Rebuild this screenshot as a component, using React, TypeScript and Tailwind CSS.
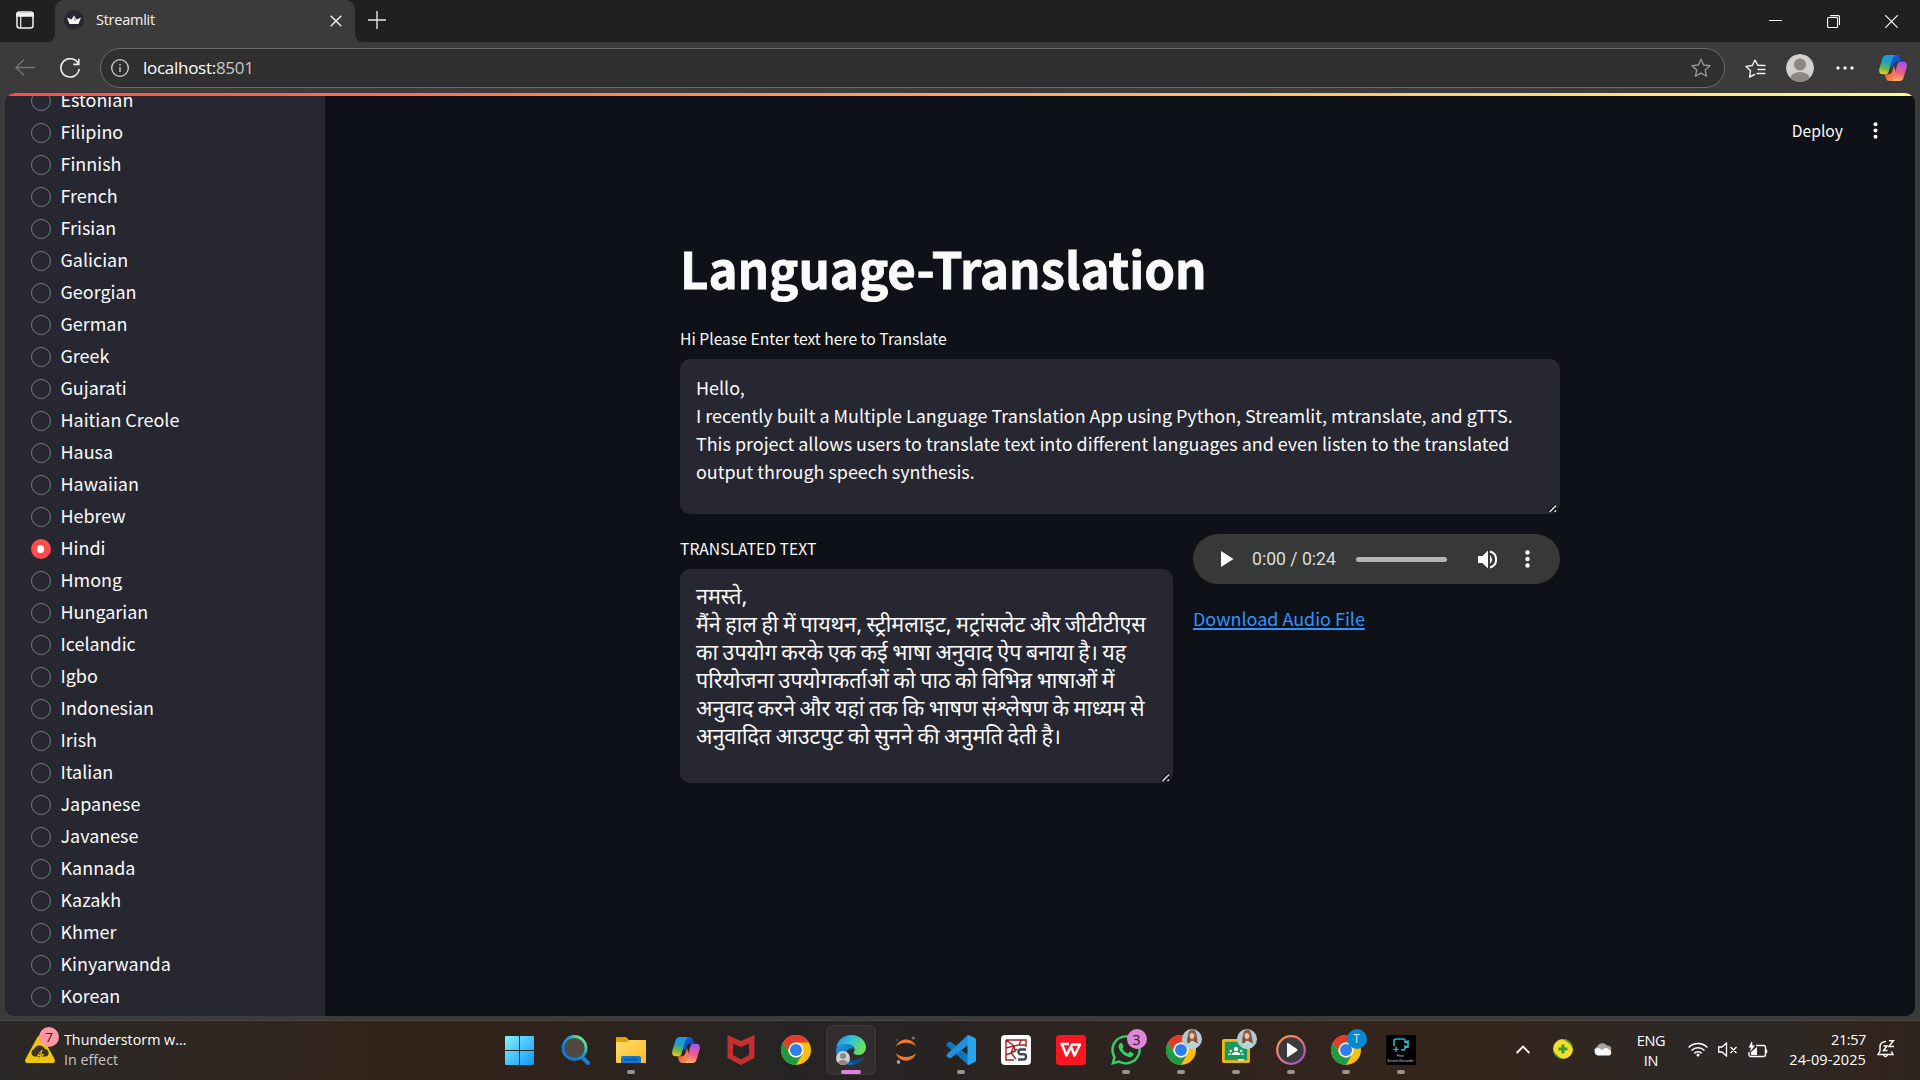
import React from "react";
import { FaWhatsapp } from "react-icons/fa";

const languages = [
  "Estonian", "Filipino", "Finnish", "French", "Frisian", "Galician", "Georgian", "German", "Greek", "Gujarati",
  "Haitian Creole", "Hausa", "Hawaiian", "Hebrew", "Hindi", "Hmong", "Hungarian", "Icelandic", "Igbo", "Indonesian",
  "Irish", "Italian", "Japanese", "Javanese", "Kannada", "Kazakh", "Khmer", "Kinyarwanda", "Korean",
];

const english = [
  "Hello,",
  "I recently built a Multiple Language Translation App using Python, Streamlit, mtranslate, and gTTS.",
  "This project allows users to translate text into different languages and even listen to the translated",
  "output through speech synthesis.",
];

const hindi = [
  "नमस्ते,",
  "मैंने हाल ही में पायथन, स्ट्रीमलाइट, मट्रांसलेट और जीटीटीएस",
  "का उपयोग करके एक कई भाषा अनुवाद ऐप बनाया है। यह",
  "परियोजना उपयोगकर्ताओं को पाठ को विभिन्न भाषाओं में",
  "अनुवाद करने और यहां तक कि भाषण संश्लेषण के माध्यम से",
  "अनुवादित आउटपुट को सुनने की अनुमति देती है।",
];

function Copilot({ id }: { id: string }) {
  const ribbon = "M8 0H17.5C15.2 0 14 1.6 13.4 3.6L9.6 16.8C9 18.6 8 19.2 6.5 19.2H3.6C.6 19.2-.4 16.6.4 13.6L3.4 3.6C4.2 1 5.6 0 8 0Z";
  const fold = "M11.5 9.5 13.4 3.2C14 1.2 15.2 0 17.5 0 19.8 0 20.6 1.2 21.2 3L22.2 6.8H18.4C16.2 6.8 15.2 8 14.6 10L13 15Z";
  return (
    <svg width="28" height="26" viewBox="0 0 28 26" className="shrink-0">
      <defs>
        <linearGradient id={id + "a"} x1="0.5" y1="0" x2="0.3" y2="1">
          <stop offset="0" stopColor="#159be8" /><stop offset=".35" stopColor="#1f9dc4" />
          <stop offset=".7" stopColor="#65b84b" /><stop offset="1" stopColor="#f5ca16" />
        </linearGradient>
        <linearGradient id={id + "b"} x1="0.6" y1="0" x2="0.4" y2="1">
          <stop offset="0" stopColor="#ffb35c" /><stop offset=".45" stopColor="#f25c85" /><stop offset="1" stopColor="#a155f0" />
        </linearGradient>
        <linearGradient id={id + "c"} x1="0" y1="0" x2="1" y2="1">
          <stop offset="0" stopColor="#1769e0" /><stop offset="1" stopColor="#0b39a8" />
        </linearGradient>
        <linearGradient id={id + "d"} x1="0" y1="0" x2="1" y2="1">
          <stop offset="0" stopColor="#ff9a56" /><stop offset="1" stopColor="#e8443c" />
        </linearGradient>
      </defs>
      <path d={fold} fill={`url(#${id}c)`} />
      <path d={fold} fill={`url(#${id}d)`} transform="rotate(180 14 13)" />
      <path d={ribbon} fill={`url(#${id}a)`} />
      <path d={ribbon} fill={`url(#${id}b)`} transform="rotate(180 14 13)" />
    </svg>
  );
}

function Chrome() {
  return (
    <svg width="30" height="30" viewBox="0 0 30 30">
      <circle cx="15" cy="15" r="15" fill="#fdbd12" />
      <path d="M15 7.5H28A15 15 0 0 0 2 7.5L8.5 18.75A7.5 7.5 0 0 1 15 7.5Z" fill="#e33b2e" />
      <path d="M8.5 18.75 2 7.5A15 15 0 0 0 15 30L21.5 18.75A7.5 7.5 0 0 1 8.5 18.75Z" fill="#219a45" />
      <circle cx="15" cy="15" r="7.5" fill="#fff" />
      <circle cx="15" cy="15" r="6" fill="#2f7de9" />
    </svg>
  );
}

function Portrait() {
  return (
    <svg width="20" height="20" viewBox="0 0 20 20" className="absolute -top-1.5 -right-1.5 rounded-full">
      <rect width="20" height="20" fill="#b4cbd6" />
      <path d="M5 14C5.500 6 6 .5 10.500 .5S14.500 7 16 14Z" fill="#8c5f45" />
      <path d="M4 20C5 14 8 12 10.500 12s5 2 6 8Z" fill="#b5d6da" />
      <ellipse cx="10" cy="6.5" rx="2.400" ry="3.400" fill="#e9c2ab" />
      <path d="M7 6Q9.500 2 12.600 6L12 3 10 1.500 8 3Z" fill="#8c5f45" />
      <path d="M7 8v6M13 8v5" stroke="#7a4d35" strokeWidth="1.5" />
    </svg>
  );
}

function Windows() {
  return (
    <svg width="29" height="29" viewBox="0 0 29 29" className="mr-0.5">
      <defs>
        <linearGradient id="win" x1="0" y1="0" x2="1" y2="1">
          <stop offset="0" stopColor="#83effd" /><stop offset="1" stopColor="#0e98fb" />
        </linearGradient>
      </defs>
      <path d="M0 1Q0 0 1 0H14V14H0ZM15 0H28Q29 0 29 1V14H15ZM0 15H14V29H1Q0 29 0 28ZM15 15H29V28Q29 29 28 29H15Z" fill="url(#win)" />
    </svg>
  );
}

function SearchIcon() {
  return (
    <svg width="30" height="30" viewBox="0 0 30 30">
      <defs>
        <linearGradient id="srch" x1="0" y1="1" x2="1" y2="0">
          <stop offset=".3" stopColor="#0f7ad8" /><stop offset=".6" stopColor="#19a0cc" /><stop offset=".85" stopColor="#63e08c" />
        </linearGradient>
      </defs>
      <path d="m20.5 21.5 6.5 6.5" stroke="#1280dc" strokeWidth="4" strokeLinecap="round" />
      <circle cx="13.5" cy="13" r="11.5" fill="#514841" stroke="url(#srch)" strokeWidth="2.8" />
    </svg>
  );
}

function Explorer() {
  return (
    <svg width="30" height="28" viewBox="0 0 30 28">
      <defs>
        <linearGradient id="fold" x1="0" y1="0" x2="1" y2="1">
          <stop offset="0" stopColor="#ffdb6b" /><stop offset="1" stopColor="#fcbd22" />
        </linearGradient>
      </defs>
      <path d="M0 2Q0 1 1 1H10L13 4H28Q30 4 30 6V10H0Z" fill="#e2a10b" />
      <path d="M0 6H10Q12 6 13 4H29Q30 4 30 5V26Q30 27 29 27H1Q0 27 0 26Z" fill="url(#fold)" />
      <path d="M5 27V22Q5 20 7 20H23Q25 20 25 22V27Z" fill="#1477cc" />
      <path d="M9 23.5H21" stroke="#0b4b91" strokeWidth="1.4" strokeLinecap="round" />
    </svg>
  );
}

function McAfee() {
  return (
    <svg width="28" height="30" viewBox="0 0 28 30">
      <path d="M.5 0 14 6 27.5 0V23L14 30 .5 23ZM6 8.5V20L14 24.2 22 20V8.5L14 12.3Z" fill="#c22f2e" fillRule="evenodd" />
    </svg>
  );
}

function Edge() {
  return (
    <svg width="30" height="30" viewBox="0 0 30 30">
      <defs>
        <linearGradient id="eg1" x1="0" y1="0" x2="1" y2=".4">
          <stop offset="0" stopColor="#1b8fdc" /><stop offset=".5" stopColor="#2fc0dc" /><stop offset="1" stopColor="#6be05a" />
        </linearGradient>
        <linearGradient id="eg2" x1="0" y1="0" x2="1" y2="1">
          <stop offset="0" stopColor="#1c9ae0" /><stop offset="1" stopColor="#0d55a8" />
        </linearGradient>
      </defs>
      <path d="M.3 13C1.5 5 7.5 0 15 0 24 0 30 6 30 12.5 30 17 26.5 20 22.5 20 19.5 20 17.5 19 17.5 17.8 17.5 17 18.6 16.3 18.6 14.5 18.6 11.5 15 9.3 10.5 9.3 6 9.3 2 11 .3 13Z" fill="url(#eg1)" />
      <path d="M0 15C.5 11 5 9 9.5 9 14.5 9 18 11.5 18.6 14.5 17 12.5 10.5 13.5 10.5 18.5 10.5 24.5 16.5 28 22 27.5 19 29.5 17 30 15 30 6.5 30 0 23.5 0 15Z" fill="url(#eg2)" />
      <path d="M10.5 18.5C10.5 25 18 27 27.5 22.5 28.5 22 28.3 23 27.8 23.8 26.5 25.8 24.5 27.5 22 28.3 16 29.5 9.5 25.5 10.5 18.5Z" fill="#104a8c" />
    </svg>
  );
}

function Jupyter() {
  return (
    <svg width="30" height="30" viewBox="0 0 30 30">
      <path d="M5 11.5C8 2 22 2 25 11.5 19 6.5 11 6.5 5 11.5ZM5 18.5C8 28 22 28 25 18.5 19 23 11 23 5 18.5Z" fill="#f3772a" />
      <circle cx="22.3" cy="3" r="1.6" fill="#767677" />
      <circle cx="6" cy="5" r="1" fill="#666" />
      <circle cx="7.5" cy="27" r="1.9" fill="#9e9e9e" />
    </svg>
  );
}

function VsCode() {
  return (
    <svg width="30" height="30" viewBox="0 0 30 30">
      <path d="M22 30V20L5 7 3 6.8.5 9 1 11Z" fill="#0d76bd" />
      <path d="M22 0V10L5 23 3 23.2.5 21 1 19Z" fill="#2190d8" />
      <path d="M21.5.2 22.5 0 29 3Q30 3.6 30 4.6V25.4Q30 26.4 29 27L22.5 30 21.5 29.5Z" fill="#2aa3f0" />
    </svg>
  );
}

function Spyder() {
  return (
    <svg width="30" height="30" viewBox="0 0 30 30">
      <rect width="30" height="30" rx="4" fill="#fafafa" />
      <path d="M5 5H25V12M5 5V25H13M5 5 13 11 5 13M20 5 18 10 13 11 10 18 5 20M25 10 18 10M13 11 14 16 10 18M14 16 16 14M10 18 15 24" stroke="#9c2427" strokeWidth="1.4" fill="none" />
      <path d="M25 14.5H19.5Q17.5 14.5 17.5 16.8T19.5 19.3H23Q25 19.3 25 21.8T23 24.5H17" stroke="#41464a" strokeWidth="2.4" fill="none" />
    </svg>
  );
}

function Wps() {
  return (
    <svg width="30" height="30" viewBox="0 0 30 30">
      <rect width="30" height="30" rx="3.5" fill="#fb1521" />
      <path d="M4.5 9H13M6 9.5 10.5 20.5 15 11.5 18.5 20.5 24 9.5H16L14.5 12.5" stroke="#fff" strokeWidth="2.5" strokeLinejoin="round" fill="none" />
    </svg>
  );
}

function Classroom() {
  return (
    <svg width="28" height="24" viewBox="0 0 28 24" className="mt-px">
      <rect width="28" height="24" rx="2" fill="#f5b313" />
      <rect x="2.8" y="2.8" width="22.4" height="18.4" fill="#189a5b" />
      <g fill="#fff">
        <circle cx="14" cy="10" r="2.2" /><path d="M9.5 16Q10 13 14 13T18.5 16Z" />
        <circle cx="8.7" cy="12" r="1.2" /><circle cx="19.3" cy="12" r="1.2" />
        <path d="M6 16Q6 14.3 9 14.3L8.5 16ZM22 16Q22 14.3 19 14.3L19.5 16ZM16 20H22V21.5H16Z" />
      </g>
    </svg>
  );
}

function MediaPlayer() {
  return (
    <svg width="30" height="30" viewBox="0 0 30 30">
      <defs>
        <linearGradient id="mp" x1="0" y1="0" x2="1" y2="1">
          <stop offset="0" stopColor="#ff9a3d" /><stop offset=".5" stopColor="#e8748a" /><stop offset="1" stopColor="#8b4fe0" />
        </linearGradient>
      </defs>
      <circle cx="15" cy="15" r="13.8" fill="#3a3a3c" stroke="url(#mp)" strokeWidth="2.2" />
      <path d="M11 8.5Q11 7.5 12 8L21 14Q22 15 21 16L12 22Q11 22.5 11 21.5Z" fill="#f6f6f6" />
    </svg>
  );
}

function Recorder() {
  return (
    <div className="flex h-[30px] w-[30px] flex-col items-center bg-black pt-[3px]">
      <svg width="18" height="15" viewBox="0 0 18 15" fill="none" stroke="#35b3d3" strokeWidth="1.6">
        <path d="M2 8V3Q2 1 4 1H12Q13 1 13 3V4L16 3V9L13 8V10Q13 12 11 12H9" />
        <path d="M4 8.5V14M1.3 11.3H6.7" strokeWidth="1.3" />
      </svg>
      <div className="mt-px text-center font-['Liberation_Sans'] text-[3.5px] leading-[4.5px] text-gray-300">
        <div>Free</div>
        <div className="whitespace-nowrap">Screen Recorder</div>
      </div>
    </div>
  );
}

function Cell({ children, run, active }: { children: React.ReactNode; run?: boolean; active?: boolean }) {
  return (
    <div className="flex w-[55px] justify-center">
      <div className={active
        ? "relative mt-1 flex h-[50px] w-[50px] items-center justify-center rounded-md border border-[#3f3a39] bg-[#322e2e]"
        : "relative mt-1 flex h-[50px] w-[50px] items-center justify-center"}>
        <div className="relative flex items-center justify-center">{children}</div>
        {run && <div className="absolute bottom-px h-1 w-2 rounded-full bg-[#989492]" />}
        {active && <div className="absolute bottom-0 h-1 w-5 rounded-full bg-[#e181d9]" />}
      </div>
    </div>
  );
}

function Grip() {
  return (
    <svg width="10" height="10" viewBox="0 0 10 10" className="absolute right-[2px] bottom-[1px]">
      <path d="M.5 8.5 8 1M4.5 9.5 9 5" stroke="#08090c" strokeWidth="1.6" />
      <path d="M1.5 9 8 2.5M6.500 9 8 7.500" stroke="#dcdcdc" strokeWidth="1.5" />
    </svg>
  );
}

function TitleBar() {
  return (
    <div className="flex h-[42px] bg-[#3b3b3b]">
      <div className="flex w-[55px] rounded-br-lg bg-[#202020] pt-[11px] pl-4">
        <svg width="18" height="18" viewBox="0 0 18 18" fill="none" stroke="#f2f2f2" strokeWidth="1.5">
          <rect x="1" y="1" width="16" height="16" rx="2.5" />
          <path d="M1 2.5H17V5H1Z" fill="#f2f2f2" /><path d="M4.7 5V17" strokeWidth="1.2" />
        </svg>
      </div>
      <div className="bg-[#202020]">
        <div className="flex h-[42px] w-[300px] rounded-t-[9px] bg-[#3b3b3b] pt-2.5 pl-[9px]">
          <svg width="20" height="20" viewBox="0 0 20 20">
            <circle cx="10" cy="10" r="10" fill="#262730" />
            <path d="M3 7.5 7.5 9.5 10 5.5 12.5 9.5 17 7.5 14.5 14H5.5Z" fill="#f4f4f4" />
            <path d="M10 5.5 12.5 9.5 10 12Z" fill="#bdbdc0" />
          </svg>
          <span className="ml-3 w-[230px] font-['Open_Sans',sans-serif] text-[14.5px] leading-5 tracking-[-0.25px] text-[#f3f3f3]">Streamlit</span>
          <svg width="12" height="12" viewBox="0 0 12 12" className="mt-[5px] ml-[4px]" stroke="#e8e8e8" strokeWidth="1.5"><path d="M.7.7 11.3 11.3M11.3.7.7 11.3" /></svg>
        </div>
      </div>
      <div className="flex flex-1 rounded-bl-lg bg-[#202020]">
        <svg width="18" height="18" viewBox="0 0 18 18" className="mt-[11px] ml-[13px]" stroke="#e8e8e8" strokeWidth="1.4"><path d="M9 0V18M0 9H18" /></svg>
        <div className="ml-auto flex pt-[15px] pr-[22px]">
          <svg width="13" height="13" viewBox="0 0 13 13" className="mr-[45px]"><path d="M0 5.5H13" stroke="#fff" /></svg>
          <svg width="13" height="13" viewBox="0 0 13 13" className="mr-[45px]" fill="none" stroke="#fff" strokeWidth="1.1">
            <rect x=".6" y="2.5" width="10" height="10" rx="1" /><path d="M3 .6H11Q12.5.6 12.5 2V10" />
          </svg>
          <svg width="13" height="13" viewBox="0 0 13 13" stroke="#fff" strokeWidth="1.2"><path d="M.3.3 12.7 12.7M12.7.3.3 12.7" /></svg>
        </div>
      </div>
    </div>
  );
}

const star = "M10 1.2 12.6 7 19 7.7 14.2 12 15.6 18.3 10 15.1 4.4 18.3 5.8 12 1 7.7 7.4 7Z";

function Toolbar() {
  return (
    <div className="flex h-[51px] items-start bg-[#3b3b3b]">
      <svg width="21" height="18" viewBox="0 0 21 18" className="mt-[17px] ml-[15px]" fill="none" stroke="#757575" strokeWidth="1.4"><path d="M20 8.5H1M9 .5 1 8.5 9 16.5" /></svg>
      <svg width="21" height="21" viewBox="0 0 21 21" className="mt-4 ml-6" fill="none" stroke="#f0f0f0" strokeWidth="1.6">
        <path d="M18.5 6.1A9.2 9.2 0 1 0 19.2 11M18.8.8V6.4H13.2" />
      </svg>
      <div className="mt-1.5 ml-[19px] flex h-10 w-[1625px] items-center rounded-full border border-[#6b6b6b] bg-[#303030] pr-[13px] pl-[10px]">
        <svg width="18" height="18" viewBox="0 0 18 18" fill="none" stroke="#d6d6d6" strokeWidth="1.3">
          <circle cx="9" cy="9" r="8.3" /><path d="M9 8V13" /><path d="M9 5V6.5" />
        </svg>
        <span className="ml-[14px] pb-px font-['Open_Sans',sans-serif] text-[17px] tracking-[-0.28px] text-white">
          localhost:<span className="text-[#c9c9c9]">8501</span>
        </span>
        <svg width="20" height="20" viewBox="0 0 20 20" className="ml-auto" fill="none" stroke="#9a9a9a" strokeWidth="1.3" strokeLinejoin="round"><path d={star} /></svg>
      </div>
      <svg width="21" height="20" viewBox="0 0 21 20" className="mt-[17px] ml-5" fill="none" stroke="#f0f0f0" strokeWidth="1.4" strokeLinejoin="round" strokeLinecap="round">
        <path d="M17 6.6 12.8 6.2 10 1 7.3 6.5 1 7.4 5.5 11.8 4.5 18 9.5 15.5M15 6.500H20M13 10.500H20M12 14.500H20" />
      </svg>
      <svg width="28" height="28" viewBox="0 0 28 28" className="mt-3 ml-5 rounded-full">
        <circle cx="14" cy="14" r="14" fill="#d3d0cd" />
        <circle cx="14" cy="10.5" r="6" fill="#8b8785" /><ellipse cx="14" cy="25" rx="10" ry="7" fill="#8b8785" />
      </svg>
      <svg width="18" height="4" viewBox="0 0 18 4" className="mt-6 ml-[22px]" fill="#f0f0f0"><circle cx="2" cy="2" r="1.7" /><circle cx="9" cy="2" r="1.7" /><circle cx="16" cy="2" r="1.7" /></svg>
      <div className="mt-[13px] ml-[25px]"><Copilot id="top" /></div>
    </div>
  );
}

function Sidebar() {
  return (
    <div className="w-80 shrink-0 overflow-hidden bg-[#262730] pl-[26px]">
      <div className="-mt-[11px]">
        {languages.map((name) => (
          <div key={name} className="flex h-8 items-center">
            {name === "Hindi"
              ? <div className="flex h-5 w-5 items-center justify-center rounded-full bg-[#ff4b4b]"><div className="mr-px h-[7.5px] w-[7.5px] rounded-full bg-white" /></div>
              : <div className="h-5 w-5 rounded-full border border-[#797a82] bg-[#272833]" />}
            <span className="-mt-[5px] ml-[9.5px] text-[17.94px] leading-7 whitespace-nowrap">{name}</span>
          </div>
        ))}
      </div>
    </div>
  );
}

function Player() {
  return (
    <div className="flex h-[50px] w-[367px] items-center rounded-full bg-[#373938]">
      <svg width="13" height="16" viewBox="0 0 13 16" className="ml-7" fill="#fff"><path d="M0 0 12.5 8 0 16Z" /></svg>
      <span className="ml-[18px] w-[86px] font-['Roboto',sans-serif] text-[17.6px] whitespace-nowrap text-[#dcdcdc]">0:00 / 0:24</span>
      <div className="ml-[18px] h-[5px] w-[91px] rounded-full bg-[#b5b5b5]" />
      <svg width="20" height="19" viewBox="0 0 20 19" className="ml-[31px]" fill="#fff">
        <path d="M0 6H4.5L10 .5V18.5L4.5 13H0Z" /><path d="M12 5Q16 9.5 12 14Z" />
        <path d="M12 1.5A8.3 8.3 0 0 1 12 17.5" fill="none" stroke="#fff" strokeWidth="2" />
      </svg>
      <svg width="5" height="18" viewBox="0 0 5 18" className="ml-[27px]" fill="#fff"><circle cx="2.5" cy="2.5" r="2.2" /><circle cx="2.5" cy="9" r="2.2" /><circle cx="2.5" cy="15.5" r="2.2" /></svg>
    </div>
  );
}

function Main() {
  return (
    <div className="flex flex-1 flex-col bg-[#0e1117]">
      <div className="flex h-[75px] items-center justify-end pr-[37px] pb-[7px]">
        <span className="mt-[2px] mr-[30px] text-[15.7px] leading-6">Deploy</span>
        <svg width="5" height="17" viewBox="0 0 5 17" fill="#fff"><circle cx="2.5" cy="2.3" r="2" /><circle cx="2.5" cy="8.5" r="2" /><circle cx="2.5" cy="14.7" r="2" /></svg>
      </div>
      <div className="ml-[355px] w-[880px] pt-[64px]">
        <h1 className="h-[66px] text-[49.3px] leading-[66px] font-bold tracking-[-0.05px] whitespace-nowrap [-webkit-text-stroke:0.8px_#fafafa]">Language-Translation</h1>
        <div className="mt-6 h-7 text-[15.7px] leading-7 whitespace-nowrap">Hi Please Enter text here to Translate</div>
        <div className="relative mt-1.5 h-[155px] rounded-[10px] bg-[#262730] px-4 pt-3.5">
          {english.map((l) => <div key={l} className="h-7 text-[17.93px] leading-7 whitespace-nowrap">{l}</div>)}
          <Grip />
        </div>
        <div className="mt-5 flex gap-5">
          <div className="w-[493px]">
            <div className="h-[35px] text-[15.7px] leading-[30px] whitespace-nowrap">TRANSLATED TEXT</div>
            <div className="relative h-[214px] rounded-[10px] bg-[#262730] px-4 pt-[16px]">
              {hindi.map((l) => <div key={l} className="h-7 font-['Noto_Sans_Devanagari','Noto_Sans',sans-serif] text-[21.5px] leading-7 [word-spacing:-1.05px] whitespace-nowrap">{l}</div>)}
              <Grip />
            </div>
          </div>
          <div>
            <Player />
            <div className="mt-[19px] text-[17.94px] leading-[30px] text-[#2f93ff] underline decoration-2 underline-offset-[2px]">Download Audio File</div>
          </div>
        </div>
      </div>
    </div>
  );
}

function Taskbar() {
  return (
    <div className="flex h-[60px] border-t border-[#4b4844] bg-[linear-gradient(90deg,#2a2826_0%,#2d2723_8%,#33241a_20%,#30231b_27%,#262423_41%,#272322_48%,#2c2320_56%,#34251c_72%,#34251c_78%,#2d2825_86%,#2c2825_93%,#32241c_98%,#2d2522_100%)] font-['Open_Sans',sans-serif]">
      <div className="flex w-[493px] pt-[7px] pl-[25px]">
        <div className="relative h-9 w-[34px]">
          <svg width="30" height="28" viewBox="0 0 30 28" className="mt-[7px]">
            <path d="M12.5 2Q15 -1.5 17.5 2L29.5 24Q31 28 27 28H3Q-1 28 .5 24Z" fill="#f2c40f" />
            <path d="M9 21.5A4 4 0 0 1 9 14 6 6 0 0 1 20 14 4 4 0 0 1 21.5 21.5Z" fill="#3b3522" />
            <path d="M17 15 12.5 20.5H16L13 25.5M17 15 15.5 19.5H18.5L13 25.5" stroke="#f2c40f" strokeWidth="1" fill="#3b3522" />
          </svg>
          <div className="absolute -top-[1px] left-[14px] flex h-5 w-5 items-center justify-center rounded-full bg-[#ff98a2] text-[13.5px] text-[#2a1517]">7</div>
        </div>
        <div className="ml-[5px] pt-0.5 text-[14.3px] leading-5 text-white">
          <div>Thunderstorm w...</div>
          <div className="text-[#c6c3c0]">In effect</div>
        </div>
      </div>
      <Cell><Windows /></Cell>
      <Cell><SearchIcon /></Cell>
      <Cell run><Explorer /></Cell>
      <Cell><Copilot id="task" /></Cell>
      <Cell><McAfee /></Cell>
      <Cell><Chrome /></Cell>
      <Cell active>
        <Edge />
        <svg width="14" height="14" viewBox="0 0 14 14" className="absolute bottom-0 left-0 rounded-full"><rect width="14" height="14" fill="#cfcfcf" /><circle cx="7" cy="5" r="3" fill="#8b8785" /><ellipse cx="7" cy="12.5" rx="5" ry="3.5" fill="#8b8785" /></svg>
      </Cell>
      <Cell><Jupyter /></Cell>
      <Cell run><VsCode /></Cell>
      <Cell><Spyder /></Cell>
      <Cell><Wps /></Cell>
      <Cell run>
        <FaWhatsapp size={34} color="#2bd368" className="-m-0.5" />
        <div className="absolute -top-1.5 -right-1.5 flex h-5 w-5 items-center justify-center rounded-full bg-[#df86d9] text-[14px] text-[#2b152a]">3</div>
      </Cell>
      <Cell run><Chrome /><Portrait /></Cell>
      <Cell run><Classroom /><div className="absolute -top-[3px] -right-px"><Portrait /></div></Cell>
      <Cell run><MediaPlayer /></Cell>
      <Cell run>
        <Chrome />
        <div className="absolute -top-1.5 -right-1.5 flex h-5 w-5 items-center justify-center rounded-full bg-[#0488d1] text-[12px] text-[#cfe8f5]">T</div>
      </Cell>
      <Cell run><Recorder /></Cell>
      <div className="flex flex-1 items-center justify-end pr-[25px] pb-[3px]">
        <svg width="14" height="9" viewBox="0 0 14 9" className="mr-[23px]" fill="none" stroke="#fff" strokeWidth="1.8"><path d="M.7 8 7 1.5 13.3 8" /></svg>
        <svg width="20" height="20" viewBox="0 0 20 20" className="mr-5">
          <circle cx="10" cy="10" r="10" fill="#f8dc2b" />
          <path d="M9 0A10 10 0 0 1 20 10L17 5Q14 2 9 0ZM11 20A10 10 0 0 1 0 10L2 14Q6 19 11 20Z" fill="#37962f" />
          <path d="M8.500 5.500H11.500V8.500H14.500V11.500H11.500V14.500H8.500V11.500H5.500V8.500H8.500Z" fill="#379c2c" />
        </svg>
        <svg width="20" height="14" viewBox="0 0 20 14" className="mr-[23px]">
          <path d="M1 8A4 4 0 0 1 4 5 5.8 5.8 0 0 1 14 3.5 4 4 0 0 1 18.5 7L16 11H3Z" fill="#a5a2a0" />
          <path d="M4.5 13.5A4 4 0 0 1 4 6Q7 5.5 9 8 13 4.5 16 7.5A3.2 3.2 0 0 1 16.5 13.5Z" fill="#fafafa" />
        </svg>
        <div className="w-[30px] pt-1 text-center text-[14.5px] leading-5 tracking-[-0.3px] text-white"><div>ENG</div><div>IN</div></div>
        <svg width="20" height="15" viewBox="0 0 20 15" className="ml-[22px]" fill="none" stroke="#fff" strokeWidth="1.5">
          <path d="M.7 5.5A13 13 0 0 1 19.3 5.5M3.5 8.5A9.2 9.2 0 0 1 16.5 8.5M6.3 11.4A5.2 5.2 0 0 1 13.7 11.4" /><circle cx="10" cy="13" r="1.5" fill="#fff" stroke="none" />
        </svg>
        <svg width="20" height="15" viewBox="0 0 20 15" className="ml-[10px]" fill="none" stroke="#fff" strokeWidth="1.3">
          <path d="M.7 5H4L8.5 1V14L4 10H.7ZM12.5 5 18.5 11M18.5 5 12.5 11" />
        </svg>
        <svg width="20" height="17" viewBox="0 0 20 17" className="ml-[10px]" fill="none" stroke="#fff" strokeWidth="1.4">
          <path d="M8 4.5H15.5Q17.5 4.5 17.5 6.5V13.5Q17.5 15.5 15.5 15.5H3Q1 15.5 1 13.5V11M18.5 8.5V12" />
          <path d="M3 14V11L9 6V14Z" fill="#fff" stroke="none" /><path d="M4 0 .5 6.5H3L2 11 7 4.5H4.5Z" fill="#fff" stroke="none" />
        </svg>
        <div className="ml-5 flex w-[78px] flex-col items-end pt-0.5 text-[14.5px] leading-5 whitespace-nowrap text-white"><div className="tracking-[-0.4px]">21:57</div><div className="tracking-[0.1px]">24-09-2025</div></div>
        <svg width="18" height="18" viewBox="0 0 18 18" className="ml-[11px]" fill="none" stroke="#fff" strokeWidth="1.4">
          <path d="M9 1.5Q3 1.5 3 7.5V11L1 14.5H16L14.5 11.5M6.5 15Q8.5 18.5 10.5 15" />
          <path d="M6.5 6H10L6.5 10.5H10.5M12 .8H16.5L12 6.5H17" />
        </svg>
      </div>
    </div>
  );
}

export default function App() {
  return (
    <div className="flex h-[1080px] w-[1920px] flex-col overflow-hidden bg-[#3b3b3b] font-['Noto_Sans_CJK_JP',sans-serif] text-[#fafafa]">
      <TitleBar />
      <Toolbar />
      <div className="mx-[5px] mb-1 flex h-[923px] flex-col overflow-hidden rounded-[10px] bg-[#0e1117]">
        <div className="h-[3px] shrink-0 bg-[linear-gradient(90deg,#ff4b4b,#fffd80)]" />
        <div className="flex min-h-0 flex-1">
          <Sidebar />
          <Main />
        </div>
      </div>
      <Taskbar />
    </div>
  );
}
